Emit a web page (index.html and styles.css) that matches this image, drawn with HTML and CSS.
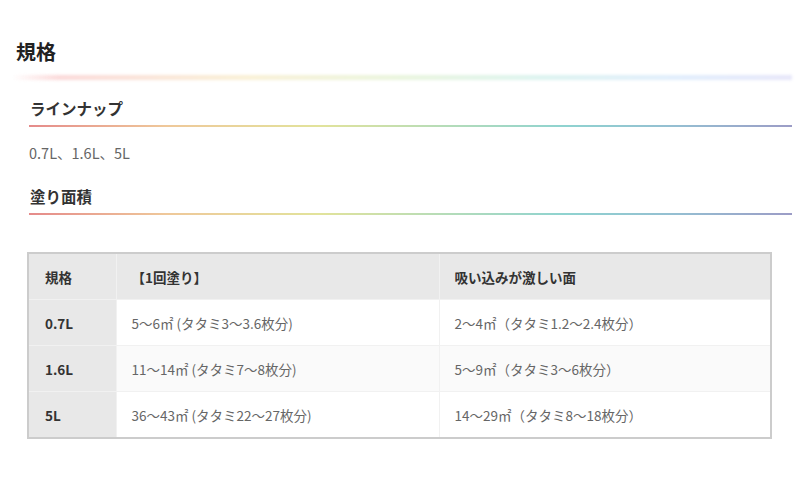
FILE: index.html
```html
<!DOCTYPE html>
<html lang="ja">
<head>
<meta charset="utf-8">
<link rel="stylesheet" href="styles.css">
</head>
<body>
<div class="page">
  <h2 class="title">規格</h2>
  <section class="spec">
    <h3 class="sub">ラインナップ</h3>
    <p class="text">0.7L、1.6L、5L</p>
    <h3 class="sub">塗り面積</h3>
    <table class="area">
      <colgroup>
        <col class="c1">
        <col class="c2">
        <col class="c3">
      </colgroup>
      <thead>
        <tr><th>規格</th><th>【1回塗り】</th><th>吸い込みが激しい面</th></tr>
      </thead>
      <tbody>
        <tr><th>0.7L</th><td>5～6㎡ (タタミ3～3.6枚分)</td><td>2～4㎡（タタミ1.2～2.4枚分）</td></tr>
        <tr class="alt"><th>1.6L</th><td>11～14㎡ (タタミ7～8枚分)</td><td>5～9㎡（タタミ3～6枚分）</td></tr>
        <tr><th>5L</th><td>36～43㎡ (タタミ22～27枚分)</td><td>14～29㎡（タタミ8～18枚分）</td></tr>
      </tbody>
    </table>
  </section>
</div>
</body>
</html>
```

FILE: styles.css
```css
html, body {
  margin: 0;
  padding: 0;
  background: #fff;
}
body {
  font-family: "Noto Sans CJK JP", "Noto Sans", sans-serif;
  color: #333;
}
.page {
  padding: 37px 8px 0 8px;
}
.title {
  position: relative;
  margin: 0;
  padding: 0 0 9px 8px;
  font-size: 20px;
  line-height: 30px;
  font-weight: 700;
  color: #222;
}
.title::after {
  content: "";
  position: absolute;
  left: 4px;
  right: 0;
  bottom: -4px;
  height: 5px;
  background: linear-gradient(to right, rgba(255,255,255,0) 0%, #f9c9c9 6%, #f7eac4 30%, #e0f1cf 50%, #cdeee9 68%, #d4e6fb 85%, #dcdcf7 100%);
  filter: blur(1.5px);
  opacity: 0.7;
}
.spec {
  padding: 20px 0 0 21px;
}
.sub {
  margin: 0;
  padding: 0 0 5px 1px;
  font-size: 15.5px;
  line-height: 24px;
  font-weight: 700;
  color: #333;
  border-bottom: 2px solid transparent;
  border-image: linear-gradient(to right, #e58a8a 0%, #efc89a 18%, #e2e39b 38%, #b4dcb9 55%, #8fd3d0 70%, #95bed2 85%, #9c9cc6 100%) 1;
}
.text {
  margin: 14px 0 19px 0;
  font-size: 14.5px;
  line-height: 24px;
  color: #666;
}
.area {
  margin: 37px 0 0 -2px;
  width: 745px;
  border-collapse: collapse;
  border: 2px solid #cccccc;
  font-size: 13.5px;
  table-layout: fixed;
}
.c1 { width: 88px; }
.c2 { width: 323px; }
.area th, .area td {
  height: 45px;
  padding: 0 15px;
  text-align: left;
  border: 1px solid #f1f1f1;
  line-height: 20px;
}
.area th {
  font-weight: 700;
  color: #333;
  background: #e8e8e8;
  padding-left: 16px;
}
.area thead th {
  background: #e8e8e8;
  padding-left: 15px;
}
.area thead th:first-child {
  padding-left: 16px;
}
.area td {
  color: #666;
  background: #fff;
}
.area .alt td {
  background: #fafafa;
}
```
